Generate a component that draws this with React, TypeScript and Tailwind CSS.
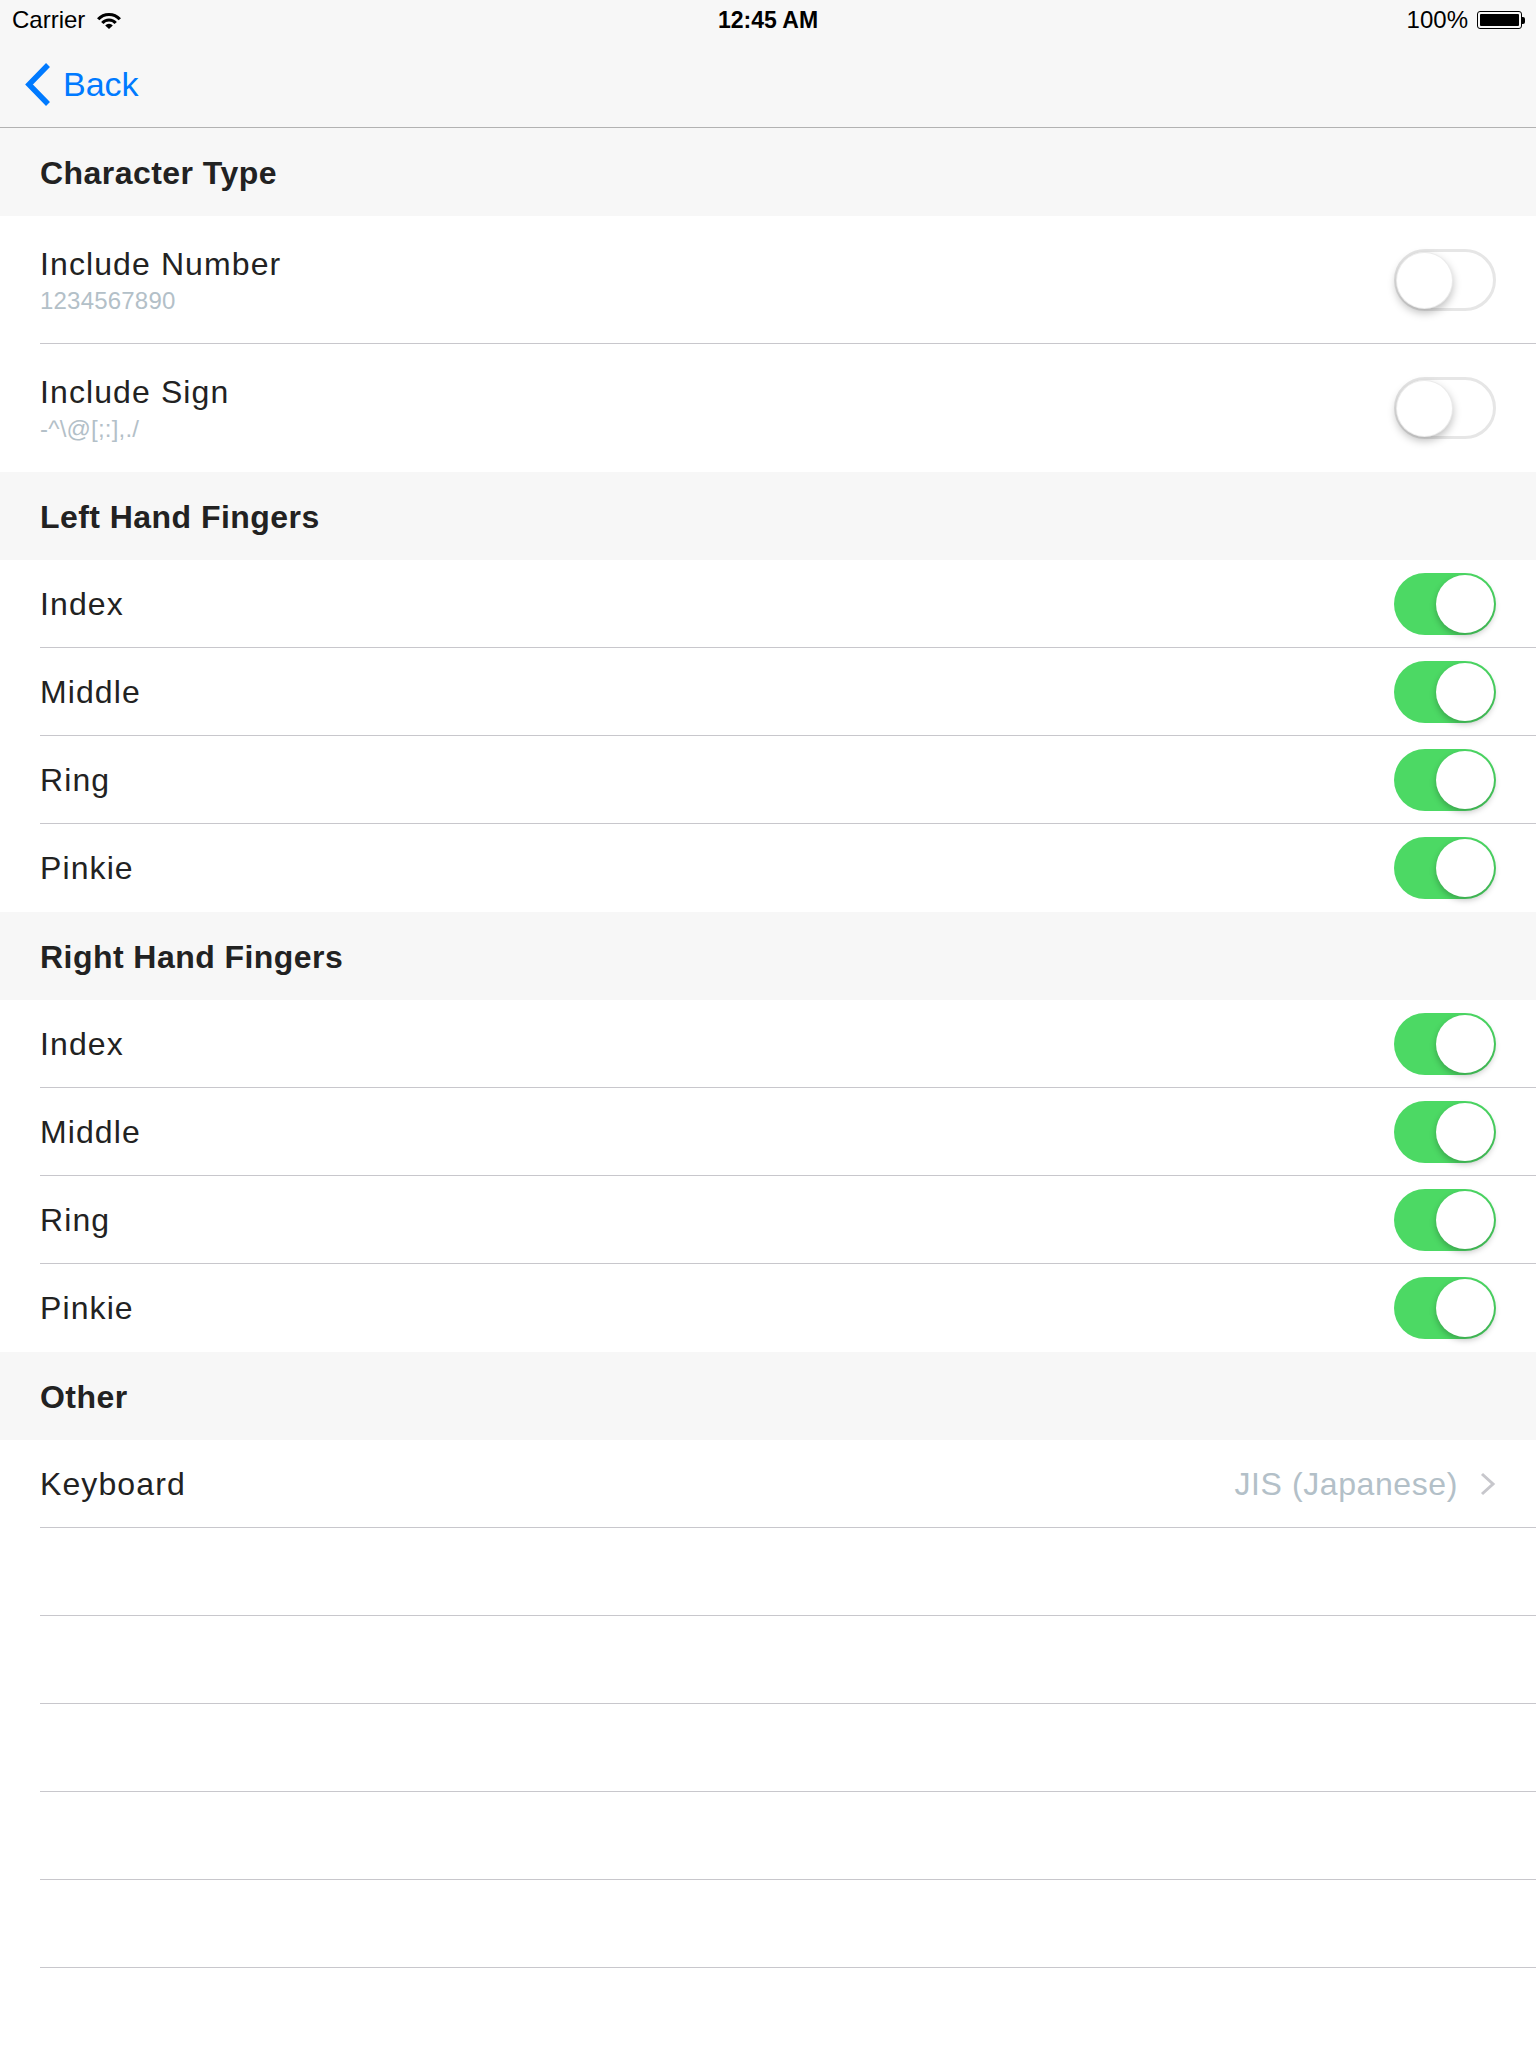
import React from "react";

function Toggle({ on }: { on: boolean }) {
  if (on) {
    return (
      <div className="relative w-[102px] h-[62px] rounded-full bg-[#4cd964] shrink-0">
        <div className="absolute top-[2px] right-[2px] w-[58px] h-[58px] rounded-full bg-white shadow-[0_3px_6px_rgba(0,0,0,0.25)]" />
      </div>
    );
  }
  return (
    <div className="relative w-[102px] h-[62px] rounded-full border-[3px] border-[#e6e6e6] bg-white shrink-0">
      <div className="absolute top-[0px] left-[-1px] w-[57px] h-[57px] rounded-full bg-white border border-[rgba(0,0,0,0.08)] shadow-[0_4px_8px_rgba(0,0,0,0.25)]" />
    </div>
  );
}

function SectionHeader({ title }: { title: string }) {
  return (
    <div className="h-[88px] bg-[#f7f7f7] flex items-center pl-[40px]">
      <span className="text-[32px] font-bold tracking-[0.45px] text-[#222222] leading-none pt-[2px]">{title}</span>
    </div>
  );
}

function ToggleRow({ title, on, last }: { title: string; on: boolean; last?: boolean }) {
  return (
    <div className="bg-white pl-[40px]">
      <div
        className={
          "h-[88px] flex items-center justify-between pr-[40px] border-b " +
          (last ? "border-transparent" : "border-[#c8c7cc]")
        }
      >
        <span className="text-[32px] tracking-[1.1px] text-[#222222]">{title}</span>
        <Toggle on={on} />
      </div>
    </div>
  );
}

function SubRow({ title, sub, last }: { title: string; sub: string; last?: boolean }) {
  return (
    <div className="bg-white pl-[40px]">
      <div
        className={
          "h-[128px] flex items-center justify-between pr-[40px] border-b " +
          (last ? "border-transparent" : "border-[#c8c7cc]")
        }
      >
        <div className="flex flex-col">
          <span className="text-[32px] leading-[38px] tracking-[1.1px] text-[#222222]">{title}</span>
          <span className="text-[24px] leading-[28px] mt-[4px] tracking-[0.2px] text-[#b3c0c8]">{sub}</span>
        </div>
        <Toggle on={false} />
      </div>
    </div>
  );
}

function EmptyRow() {
  return (
    <div className="bg-white pl-[40px]">
      <div className="h-[88px] border-b border-[#c8c7cc]" />
    </div>
  );
}

export default function App() {
  return (
    <div className="w-[1536px] h-[2048px] overflow-hidden bg-white font-['Liberation_Sans',Arial,sans-serif]">
      {/* status bar */}
      <div className="h-[40px] bg-[#f7f7f7] grid grid-cols-3 items-center">
        <div className="flex items-center pl-[12px] gap-[11px]">
          <span className="text-[24px] text-black leading-none">Carrier</span>
          <svg width="26" height="17" viewBox="0 0 26 17">
            <path d="M2.2 7.3 A14.5 14.5 0 0 1 23.8 7.3" fill="none" stroke="#000" strokeWidth="3.2" />
            <path d="M6.31 10.98 A9 9 0 0 1 19.69 10.98" fill="none" stroke="#000" strokeWidth="3.2" />
            <path d="M13 17 L9.2 13.6 A5 5 0 0 1 16.8 13.6 Z" fill="#000" />
          </svg>
        </div>
        <div className="flex justify-center">
          <span className="text-[23px] font-bold text-black leading-none">12:45 AM</span>
        </div>
        <div className="flex items-center justify-end pr-[11px] gap-[9px]">
          <span className="text-[24px] text-black leading-none">100%</span>
          <div className="flex items-center">
            <div className="w-[45px] h-[18px] border border-black rounded-[3px] p-[2px]">
              <div className="w-full h-full bg-black rounded-[1px]" />
            </div>
            <div className="w-[3px] h-[7px] bg-black rounded-r-[2px]" />
          </div>
        </div>
      </div>
      {/* nav bar */}
      <div className="h-[88px] bg-[#f7f7f7] border-b border-[#b2b2b2] flex items-center pl-[25px]">
        <svg width="26" height="43" viewBox="0 0 26 43" className="mt-[2px]">
          <polyline points="23,2 4,21.5 23,41" fill="none" stroke="#007aff" strokeWidth="5.5" />
        </svg>
        <span className="ml-[12px] text-[34px] text-[#007aff] leading-none">Back</span>
      </div>

      <SectionHeader title="Character Type" />
      <SubRow title="Include Number" sub="1234567890" />
      <SubRow title="Include Sign" sub="-^\@[;:],./" last />

      <SectionHeader title="Left Hand Fingers" />
      <ToggleRow title="Index" on />
      <ToggleRow title="Middle" on />
      <ToggleRow title="Ring" on />
      <ToggleRow title="Pinkie" on last />

      <SectionHeader title="Right Hand Fingers" />
      <ToggleRow title="Index" on />
      <ToggleRow title="Middle" on />
      <ToggleRow title="Ring" on />
      <ToggleRow title="Pinkie" on last />

      <SectionHeader title="Other" />
      <div className="bg-white pl-[40px]">
        <div className="h-[88px] flex items-center justify-between pr-[40px] border-b border-[#c8c7cc]">
          <span className="text-[32px] tracking-[1.1px] text-[#222222]">Keyboard</span>
          <div className="flex items-center gap-[22px]">
            <span className="text-[32px] tracking-[0.6px] text-[#b3c0c8]">JIS (Japanese)</span>
            <svg width="16" height="24" viewBox="0 0 16 24">
              <polyline points="2,2 13,12 2,22" fill="none" stroke="#c7c7cc" strokeWidth="3" />
            </svg>
          </div>
        </div>
      </div>
      <EmptyRow />
      <EmptyRow />
      <EmptyRow />
      <EmptyRow />
      <EmptyRow />
      <EmptyRow />
    </div>
  );
}
